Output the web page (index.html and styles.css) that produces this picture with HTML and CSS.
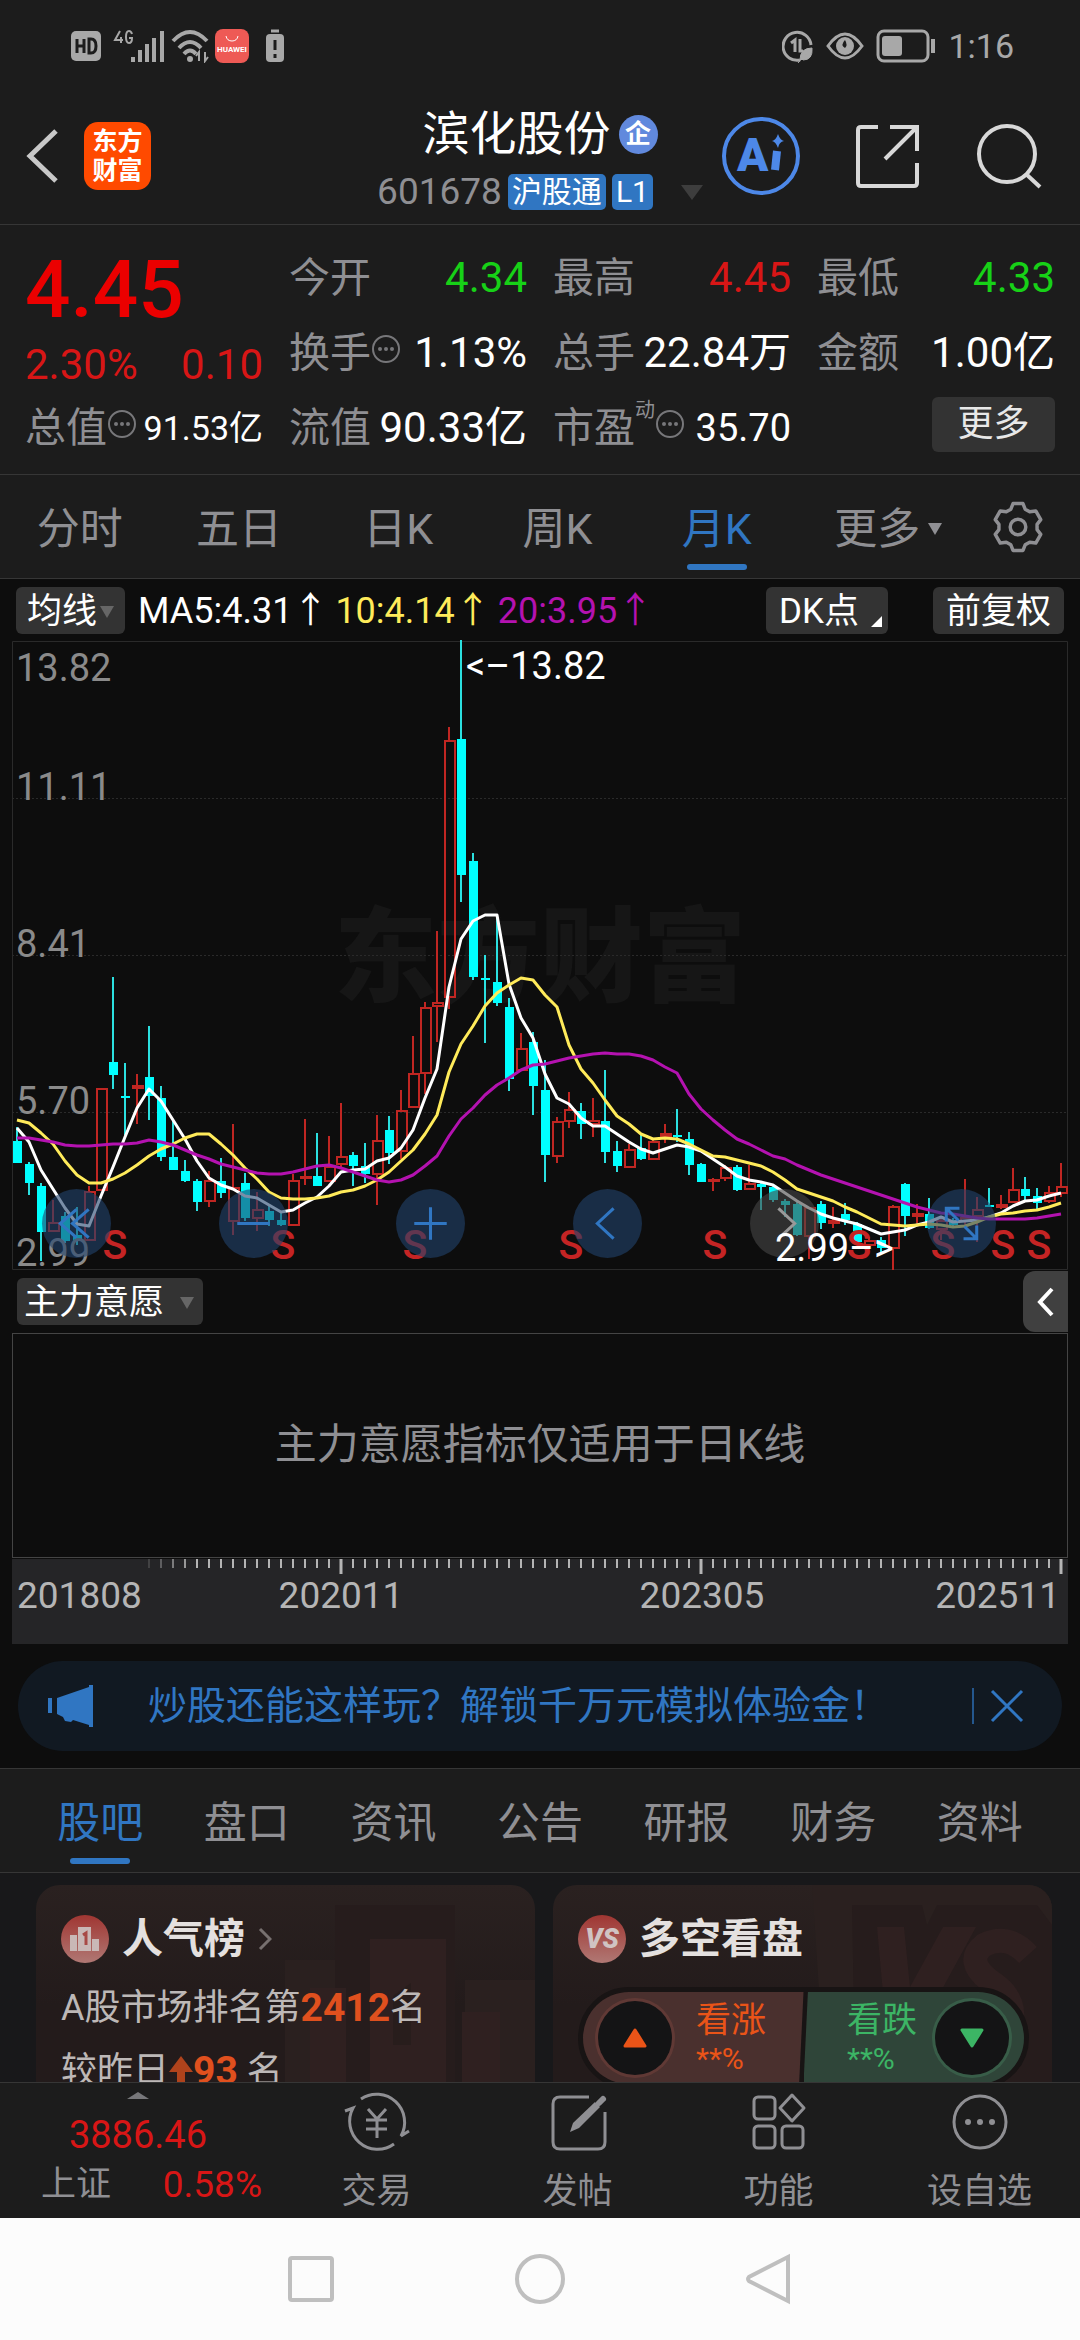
FILE: index.html
```html
<!DOCTYPE html>
<html lang="zh-CN">
<head>
	<meta charset="utf-8">
	<meta name="viewport" content="width=device-width, initial-scale=1">
	<title>滨化股份 601678</title>
	<link rel="stylesheet" href="styles.css">
</head>
<body>
<div class="app">
	<div class="statusbar">
		<div class="status-group">
			<svg width="30" height="32" viewBox="0 0 30 32"><rect y="1" width="30" height="30" rx="5" fill="#a8a8a8"/><path d="M6 9v14M13 9v14M6 16h7M18 9v14h2q5 0 5-7t-5-7z" fill="none" stroke="#1c1c1c" stroke-width="3"/></svg>
			<svg class="signal" width="52" height="34" viewBox="0 0 52 34"><path d="M7 2L2 11h8M8 8v6M19 5q-1-3-3-3-3 0-3 6t3 6q3 0 3-5h-3" fill="none" stroke="#a8a8a8" stroke-width="2"/><path d="M20 28v5M27 21v12M34 15v18M41 9v24M49 2v31" stroke="#a8a8a8" stroke-width="4"/></svg>
			<svg width="38" height="34" viewBox="0 0 38 34" fill="none" stroke="#a8a8a8" stroke-width="4"><path d="M2 12q17-18 34 0M8 19q11-12 22 0M13 25q6-7 12 0"/><circle cx="19" cy="30" r="3" fill="#a8a8a8" stroke="none"/><path d="M28 32v-9l-3 4M34 23v9l3-4" stroke-width="2"/></svg>
			<svg class="hw" width="34" height="34" viewBox="0 0 34 34"><rect width="34" height="34" rx="8" fill="#ee5a55"/><path d="M11 7q1 5 6 5t6-5" fill="none" stroke="#fff" stroke-width="1"/><text x="17" y="23" text-anchor="middle" class="hw-text">HUAWEI</text></svg>
			<svg class="batt" width="20" height="34" viewBox="0 0 20 34"><path d="M6 2h8" stroke="#a8a8a8" stroke-width="3"/><rect x="1" y="5" width="18" height="28" rx="4" fill="#a8a8a8"/><path d="M10 11v10M10 25v4" stroke="#1c1c1c" stroke-width="3"/></svg>
		</div>
		<div class="status-group">
			<svg width="32" height="34" viewBox="0 0 32 34" fill="none" stroke="#a8a8a8" stroke-width="3"><path d="M18 31A14 14 0 1 1 29 16"/><path d="M9 14l4-3v12M18 10v12h3"/><path d="M18 31q0-12 12-12 1 12-9 12M16 34l8-9" fill="#a8a8a8" stroke-width="1"/></svg>
			<svg width="38" height="28" viewBox="0 0 38 28"><path d="M2 14Q19-10 36 14 19 38 2 14z" fill="none" stroke="#a8a8a8" stroke-width="3"/><circle cx="19" cy="14" r="9" fill="#a8a8a8"/><path d="M19 8q-5 5 0 8 3-3 0-8z" fill="#1c1c1c"/></svg>
			<svg width="60" height="34" viewBox="0 0 60 34"><rect x="2" y="2" width="50" height="30" rx="6" fill="none" stroke="#a8a8a8" stroke-width="3"/><rect x="6" y="7" width="20" height="20" rx="3" fill="#a8a8a8"/><path d="M57 10v14" stroke="#a8a8a8" stroke-width="4"/></svg>
			<span class="clock">1:16</span>
		</div>
	</div>

	<header class="header">
		<div class="header-left">
			<button class="icon-btn" aria-label="返回"><svg width="32" height="54" viewBox="0 0 32 54"><path d="M30 2L4 27l26 25" fill="none" stroke="#c8c8c8" stroke-width="5"/></svg></button>
			<div class="logo">东方<br>财富</div>
		</div>
		<div class="header-title">
			<h1>滨化股份<span class="badge">企</span></h1>
			<div class="code-line">
				<span class="code">601678</span><span class="tag">沪股通</span><span class="tag">L1</span><i class="tri tri-code"></i>
			</div>
		</div>
		<div class="header-right">
			<button class="icon-btn" aria-label="Ai"><svg width="78" height="78" viewBox="0 0 78 78"><circle cx="39" cy="39" r="37" fill="none" stroke="#4d88e8" stroke-width="4"/><text x="15" y="54" class="ai-text">A</text><path d="M55 34l-2 19" stroke="#4d88e8" stroke-width="8"/><path d="M56 17q2 6 6 7-5 1-6 7-2-6-6-7 4-1 6-7z" fill="#4d88e8"/></svg></button>
			<button class="icon-btn" aria-label="分享"><svg width="64" height="64" viewBox="0 0 64 64" fill="none" stroke="#d8d8d8" stroke-width="4"><path d="M22 3H5q-3 0-3 3v53q0 3 3 3h53q3 0 3-3V39"/><path d="M34 3h27v24M60 4L29 35"/></svg></button>
			<button class="icon-btn" aria-label="搜索"><svg width="66" height="66" viewBox="0 0 66 66" fill="none" stroke="#d8d8d8" stroke-width="4"><circle cx="31" cy="31" r="28"/><path d="M50 51l14 13"/></svg></button>
		</div>
	</header>

	<section class="quote">
		<div class="price-block">
			<div class="price">4.45</div>
			<div class="change"><span>2.30%</span><span>0.10</span></div>
		</div>
		<div class="cell"><label>今开</label><b class="down">4.34</b></div>
		<div class="cell"><label>最高</label><b class="up">4.45</b></div>
		<div class="cell"><label>最低</label><b class="down">4.33</b></div>
		<div class="cell"><label>换手</label><svg class="dots"><use href="#dots"/></svg><b>1.13%</b></div>
		<div class="cell"><label>总手</label><b>22.84万</b></div>
		<div class="cell"><label>金额</label><b>1.00亿</b></div>
		<div class="cell"><label>总值</label><svg class="dots"><use href="#dots"/></svg><b class="small">91.53亿</b></div>
		<div class="cell"><label>流值</label><b>90.33亿</b></div>
		<div class="cell"><label>市盈<sup>动</sup></label><svg class="dots"><use href="#dots"/></svg><b class="medium">35.70</b></div>
		<div class="cell"><button class="more-btn">更多</button></div>
	</section>

	<nav class="tabs period-tabs">
		<button class="tab">分时</button>
		<button class="tab">五日</button>
		<button class="tab">日K</button>
		<button class="tab">周K</button>
		<button class="tab active">月K</button>
		<button class="tab tab-more">更多<i class="tri tri-tab"></i></button>
		<button class="tab-gear" aria-label="设置"><svg width="52" height="52" viewBox="-12 -12 24 24" fill="none" stroke="#8f8f93" stroke-width="1.6" stroke-linejoin="round"><path d="M-3.3-8.2L-2.3-10.8H2.3L3.3-8.2 5.4-7 8.2-7.4 10.5-3.4 8.8-1.2V1.2L10.5 3.4 8.2 7.4 5.4 7 3.3 8.2 2.3 10.8H-2.3L-3.3 8.2-5.4 7-8.2 7.4-10.5 3.4-8.8 1.2V-1.2L-10.5-3.4-8.2-7.4-5.4-7z"/><circle r="3.6"/></svg></button>
	</nav>

	<main class="main">
		<div class="chart-area">
			<div class="chart-toolbar">
				<button class="chip chip-ma">均线<i class="tri"></i></button>
				<span class="ma ma5">MA5:4.31↑</span>
				<span class="ma ma10">10:4.14↑</span>
				<span class="ma ma20">20:3.95↑</span>
				<button class="chip chip-dk">DK点<i class="corner"></i></button>
				<button class="chip">前复权</button>
			</div>
			<div class="chart">
				<svg id="kline" viewBox="0 0 1056 630">
					<text x="528" y="354" class="watermark">东方财富</text>
					<path d="M0 158.5H1056M0 315.5H1056M0 472.5H1056" stroke="#2a2a2a" stroke-dasharray="2 2"/>
					<path d="M.5 1.5H1055.5V629.5H.5z" fill="none" stroke="#2a2a2a"/>
					<g id="candles"></g>
					<g class="axis-label">
						<text x="4" y="41">13.82</text>
						<text x="4" y="160">11.11</text>
						<text x="4" y="317">8.41</text>
						<text x="4" y="474">5.70</text>
						<text x="4" y="626">2.99</text>
					</g>
					<g id="lines" fill="none" stroke-width="3" stroke-linejoin="round"></g>
					<g id="signals" class="signal-s"></g>
					<text x="454" y="39" class="peak">&lt;–13.82</text>
				</svg>
				<div class="chart-controls">
					<button class="round" aria-label="最左"><svg viewBox="0 0 68 68"><path d="M34 20L18 34l16 14M46 20L30 34l16 14"/></svg></button>
					<button class="round" aria-label="缩小"><svg viewBox="0 0 68 68"><path d="M18 34h32"/></svg></button>
					<button class="round" aria-label="放大"><svg viewBox="0 0 68 68"><path d="M18 34h32M34 18v32"/></svg></button>
					<button class="round" aria-label="左移"><svg viewBox="0 0 68 68"><path d="M40 19L24 34l16 15"/></svg></button>
					<button class="round round-off" aria-label="右移"><svg viewBox="0 0 68 68"><path d="M28 19l16 15-16 15"/></svg></button>
					<button class="round" aria-label="全屏"><svg viewBox="0 0 68 68"><path d="M19 32V19h13M19 19l12 12M49 36v13H36M49 49L37 37"/></svg></button>
				</div>
				<svg class="chart-top" viewBox="0 0 1056 630"><text x="763" y="621" class="peak">2.99–&gt;</text></svg>
			</div>
			<div class="indicator-bar">
				<button class="chip">主力意愿<i class="tri"></i></button>
				<button class="drawer" aria-label="展开"><svg width="18" height="30" viewBox="0 0 18 30"><path d="M15 2L3 15l12 13" fill="none" stroke="#fff" stroke-width="4"/></svg></button>
			</div>
			<div class="indicator">主力意愿指标仅适用于日K线</div>
			<svg class="timeline" viewBox="0 0 1056 85">
				<g id="ticks" stroke="#b5b5b5"></g>
				<text x="5" y="49">201808</text>
				<text x="329" y="49" text-anchor="middle">202011</text>
				<text x="690" y="49" text-anchor="middle">202305</text>
				<text x="1048" y="49" text-anchor="end">202511</text>
			</svg>
			<div class="notice">
				<svg width="46" height="42" viewBox="0 0 46 42" fill="#3076c2"><path d="M0 13h4v15H0zM9 13l32-11v38l-16-5-2 2-6-1-2-4-6-3z"/><path d="M41 0h4v42h-4z"/></svg>
				<a href="#" class="notice-text">炒股还能这样玩？解锁千万元模拟体验金！</a>
				<i class="notice-line"></i>
				<button class="icon-btn" aria-label="关闭"><svg width="34" height="34" viewBox="0 0 34 34"><path d="M2 2l30 30M32 2L2 32" stroke="#3076c2" stroke-width="3"/></svg></button>
			</div>
		</div>

		<nav class="tabs info-tabs">
			<button class="tab active">股吧</button>
			<button class="tab">盘口</button>
			<button class="tab">资讯</button>
			<button class="tab">公告</button>
			<button class="tab">研报</button>
			<button class="tab">财务</button>
			<button class="tab">资料</button>
		</nav>

		<div class="cards">
			<div class="card">
				<svg class="card-bg" viewBox="0 0 260 300"><path d="M10 75h60v225H10zM190 95h70v205h-70z" fill="#2a201f"/><path d="M60 20h120v280H60z" fill="#261c1c"/><path d="M35 103h36v197H35zM95 54h76v246H95zM187 127h38v173h-38z" fill="#2f2020"/><path d="M118 111l18-13v62h-18v-35z" fill="#281d1c"/></svg>
				<h2>
					<svg width="48" height="48" viewBox="0 0 48 48"><circle cx="24" cy="24" r="24" fill="url(#red)"/><path d="M9 20h7v16H9zM17 12h13v24H17zM31 24h7v12h-7z" fill="#c9b8b6"/><path d="M22 20l3-2v12" fill="none" stroke="#a84a46" stroke-width="3"/></svg>
					人气榜
					<svg class="go" width="14" height="24" viewBox="0 0 14 24"><path d="M2 2l10 10L2 22" fill="none" stroke="#77706f" stroke-width="3"/></svg>
				</h2>
				<p>A股市场排名第<strong>2412</strong>名</p>
				<p>较昨日<svg class="rise" width="24" height="34" viewBox="0 0 24 34"><path d="M12 2l12 16h-8v16H8V18H0z" fill="#b0431c"/></svg><strong>93</strong> 名</p>
			</div>
			<div class="card">
				<svg class="card-bg" viewBox="0 0 260 300"><path d="M20 0h240v300H40z" fill="#2a201f"/><path d="M60 20h70l5 20 10-20h100l15 20v260H65z" fill="#261c1c"/><path d="M85 42h27l6 60 33-60h33l-60 110H95z" fill="#2f2020"/><path d="M236 70q-20-22-44-10-20 16 6 36 32 20 18 52-20 26-60 10" fill="none" stroke="#2f2020" stroke-width="24"/></svg>
				<h2>
					<svg width="48" height="48" viewBox="0 0 48 48"><circle cx="24" cy="24" r="24" fill="url(#red)"/><text x="24" y="33" text-anchor="middle" class="vs-text">VS</text></svg>
					多空看盘
				</h2>
				<div class="vote">
					<button class="vote-up"><span class="vote-dot"><svg width="24" height="20" viewBox="0 0 24 20"><path d="M12 2l10 16H2z" fill="#ea5418" stroke="#ea5418" stroke-width="3" stroke-linejoin="round"/></svg></span><span class="vote-text">看涨<small>**%</small></span></button>
					<button class="vote-down"><span class="vote-text">看跌<small>**%</small></span><span class="vote-dot"><svg width="24" height="20" viewBox="0 0 24 20"><path d="M12 18L2 2h20z" fill="#3cb565" stroke="#3cb565" stroke-width="3" stroke-linejoin="round"/></svg></span></button>
				</div>
			</div>
		</div>
	</main>

	<footer class="bottombar">
		<button class="index">
			<i class="tri tri-up"></i>
			<span class="index-value">3886.46</span>
			<span class="index-row"><span>上证</span><em>0.58%</em></span>
		</button>
		<button class="action"><svg width="66" height="60" viewBox="0 0 66 60" fill="none" stroke="#8f8f93" stroke-width="3"><path d="M17 7A28 28 0 0 1 57 44l8-5M50 52A28 28 0 0 1 9 16l-8 3"/><path d="M24 17l9 10 9-10M22 28h21M22 37h21M33 27v19"/></svg>交易</button>
		<button class="action"><svg width="60" height="60" viewBox="0 0 60 60" fill="none" stroke="#8f8f93" stroke-width="3"><path d="M41 5H12q-7 0-7 7v38q0 7 7 7h38q7 0 7-7V20"/><path d="M22 40l3-9L47 10l5 5-21 21z" fill="#8f8f93" stroke="none"/><path d="M51 11l4-4" stroke-width="6" stroke-linecap="round"/></svg>发帖</button>
		<button class="action"><svg width="60" height="60" viewBox="0 0 60 60" fill="none" stroke="#8f8f93" stroke-width="3"><rect x="5" y="5" width="21" height="22" rx="4"/><rect x="5" y="34" width="21" height="22" rx="4"/><rect x="33" y="34" width="21" height="22" rx="4"/><path d="M43 3l12 13-12 13-12-13z" stroke-linejoin="round"/></svg>功能</button>
		<button class="action"><svg width="60" height="60" viewBox="0 0 60 60"><circle cx="30" cy="30" r="26" fill="none" stroke="#8f8f93" stroke-width="3"/><circle cx="18" cy="30" r="3" fill="#8f8f93"/><circle cx="30" cy="30" r="3" fill="#8f8f93"/><circle cx="42" cy="30" r="3" fill="#8f8f93"/></svg>设自选</button>
	</footer>

	<div class="navbar">
		<svg width="48" height="48" viewBox="0 0 48 48"><rect x="3" y="3" width="42" height="42" rx="2"/></svg>
		<svg width="50" height="50" viewBox="0 0 50 50"><circle cx="25" cy="25" r="23"/></svg>
		<svg width="48" height="52" viewBox="0 0 48 52"><path d="M43 4v44L4 28q-2-2 0-4z"/></svg>
	</div>
</div>

<svg width="0" height="0" class="defs">
	<defs>
		<symbol id="dots" viewBox="0 0 30 30"><circle cx="15" cy="15" r="13" fill="none" stroke="#77777a" stroke-width="2"/><circle cx="9" cy="15" r="2" fill="#77777a"/><circle cx="15" cy="15" r="2" fill="#77777a"/><circle cx="21" cy="15" r="2" fill="#77777a"/></symbol>
		<linearGradient id="red" x1="0" y1="0" x2="0" y2="1"><stop offset="0" stop-color="#a03632"/><stop offset="1" stop-color="#b07874"/></linearGradient>
	</defs>
</svg>
<script src="chart.js"></script>
</body>
</html>
```

FILE: styles.css
```css
* {
	box-sizing: border-box;
}
body {
	margin: 0;
	background-color: #0d0d0d;
	color: #fff;
	font-family: Roboto, "Noto Sans CJK SC", sans-serif;
	font-size: 36px;
	line-height: 1.2;
}
button {
	margin: 0;
	padding: 0;
	border: 0;
	background: none;
	color: inherit;
	font: inherit;
	cursor: pointer;
}
svg {
	display: block;
	flex: none;
}
.defs {
	position: absolute;
}
.app {
	display: flex;
	flex-direction: column;
	height: 100vh;
	overflow: hidden;
}
.tri {
	width: 0;
	height: 0;
	border: 7px solid transparent;
	border-top: 12px solid #666;
	border-bottom: 0;
}

/* status bar */
.statusbar {
	display: flex;
	justify-content: space-between;
	align-items: center;
	height: 88px;
	padding: 4px 66px 0 71px;
	background-color: #1c1c1c;
}
.status-group {
	display: flex;
	align-items: center;
	gap: 12px;
}
.signal {
	margin-right: -6px;
}
.hw {
	margin-left: -6px;
}
.batt {
	margin-left: 4px;
}
.hw-text {
	font-size: 8px;
	font-weight: bold;
	fill: #fff;
}
.clock {
	color: #a8a8a8;
	font-size: 34px;
	line-height: 40px;
}

/* title */
.header {
	display: grid;
	grid-template-columns: 1fr auto 1fr;
	align-items: center;
	height: 137px;
	background-color: #1c1c1c;
	border-bottom: 1px solid #363636;
}
.icon-btn {
	display: block;
}
.header-left {
	display: flex;
	align-items: center;
	gap: 26px;
	padding-left: 26px;
}
.logo {
	width: 67px;
	height: 68px;
	padding-top: 5px;
	border-radius: 14px;
	background-color: #ff4a00;
	font-size: 25px;
	font-weight: bold;
	line-height: 29px;
	text-align: center;
}
.header-title {
	padding-top: 14px;
}
.header-title h1 {
	display: flex;
	justify-content: center;
	align-items: center;
	gap: 8px;
	margin: 0;
	font-size: 47px;
	font-weight: normal;
	line-height: 58px;
}
.badge {
	width: 39px;
	height: 39px;
	border-radius: 50%;
	background-color: #6189dd;
	font-size: 26px;
	font-weight: bold;
	line-height: 38px;
	text-align: center;
}
.code-line {
	display: flex;
	align-items: center;
	gap: 6px;
	height: 58px;
}
.code {
	color: #8f8f93;
	font-size: 37px;
}
.tag {
	padding: 0 4px;
	border-radius: 5px;
	background-color: #3076c2;
	font-size: 30px;
	line-height: 36px;
}
.tri-code {
	margin-left: 22px;
	border-width: 15px 11px 0;
	border-top-color: #3d3d3d;
}
.header-right {
	display: flex;
	justify-content: flex-end;
	align-items: center;
	gap: 56px;
	padding-right: 38px;
}
.ai-text {
	font-size: 46px;
	font-weight: 900;
	fill: #4d88e8;
}

/* quote */
.quote {
	display: grid;
	grid-template-columns: repeat(4, 1fr);
	grid-auto-rows: 75px;
	column-gap: 26px;
	padding: 15px 25px 9px;
	background-color: #1c1c1c;
	border-bottom: 1px solid #363636;
}
.price-block {
	grid-row: span 2;
	color: #eb0000;
}
.price {
	font-size: 80px;
	font-weight: 500;
	line-height: 100px;
}
.change {
	display: flex;
	justify-content: space-between;
	color: #d81616;
	font-size: 42px;
	line-height: 50px;
}
.cell {
	display: flex;
	align-items: center;
	white-space: nowrap;
}
.cell label {
	display: flex;
	color: #8f8f93;
	font-size: 41px;
	line-height: 60px;
}
.cell sup {
	font-size: 20px;
	line-height: 24px;
}
.cell b {
	margin-left: auto;
	font-size: 42px;
	font-weight: normal;
	line-height: 60px;
}
.cell .small {
	font-size: 34px;
}
.cell .medium {
	font-size: 38px;
}
.cell .up {
	color: #d81616;
}
.cell .down {
	color: #17d117;
}
.dots {
	width: 30px;
	height: 30px;
	margin-bottom: 8px;
}
.more-btn {
	width: 123px;
	height: 55px;
	margin: 0 0 6px auto;
	border-radius: 6px;
	background-color: #333;
	color: #e8e8e8;
	font-size: 36px;
}

/* tabs */
.tabs {
	display: flex;
	height: 104px;
	background-color: #1c1c1c;
	border-bottom: 1px solid #363636;
}
.tab {
	position: relative;
	flex: 1;
	padding-top: 5px;
	color: #8f8f93;
	font-size: 43px;
	line-height: 60px;
}
.tab.active {
	color: #3076c2;
}
.tab.active::after {
	content: "";
	position: absolute;
	left: 50%;
	bottom: 8px;
	width: 60px;
	height: 6px;
	margin-left: -30px;
	border-radius: 3px;
	background-color: #3076c2;
}
.tab-more {
	display: flex;
	flex: none;
	justify-content: center;
	align-items: center;
	gap: 8px;
	width: 17%;
}
.tri-tab {
	border-top-color: #8f8f93;
}
.tab-gear {
	padding: 0 36px 0 12px;
}
.info-tabs {
	height: 105px;
	padding: 0 27px;
	border-top: 1px solid #363636;
}

/* chart */
.main {
	flex: 1;
	min-height: 0;
	overflow: hidden;
	background-color: #18181a;
}
.chart-area {
	padding: 0 12px 17px;
	background-color: #0d0d0d;
}
.chart-toolbar {
	display: flex;
	align-items: center;
	gap: 7px;
	height: 61px;
	padding: 2px 4px 0;
	white-space: nowrap;
}
.chip {
	display: flex;
	align-items: center;
	gap: 4px;
	height: 47px;
	padding: 2px 13px 0;
	border-radius: 6px;
	background-color: #333;
	font-size: 35px;
}
.chip-ma {
	gap: 3px;
	padding: 2px 11px 0;
}
.ma {
	padding-top: 2px;
	font-size: 36px;
}
.ma5 {
	margin-left: 6px;
}
.ma10 {
	color: #ffeb5a;
}
.ma20 {
	color: #b412b0;
}
.chip-dk {
	margin: 0 38px 0 auto;
	padding-right: 6px;
}
.chip-dk .corner {
	align-self: flex-end;
	margin: 0 0 7px 8px;
	border-left: 11px solid transparent;
	border-bottom: 11px solid #fff;
}
.chart {
	position: relative;
}
.chart > svg {
	width: 100%;
}
.chart-top {
	position: absolute;
	top: 0;
	left: 0;
	pointer-events: none;
}
.watermark {
	font-size: 103px;
	font-weight: 900;
	text-anchor: middle;
	fill: #161616;
}
.axis-label {
	font-size: 38px;
	fill: #8a8a8a;
}
.signal-s {
	font-size: 41px;
	font-weight: 500;
	text-anchor: middle;
	fill: #c42424;
}
.peak {
	font-size: 38px;
	fill: #fff;
}
.chart-controls {
	position: absolute;
	left: 30px;
	right: 72px;
	bottom: 12px;
	display: flex;
	justify-content: space-between;
}
.round {
	width: 69px;
	height: 69px;
	border-radius: 50%;
	background-color: rgba(34, 66, 108, 0.6);
}
.round path {
	fill: none;
	stroke: #3076c2;
	stroke-width: 3;
}
.round-off {
	background-color: rgba(70, 70, 70, 0.6);
}
.round-off path {
	stroke: #999;
}
.indicator-bar {
	display: flex;
	justify-content: space-between;
	align-items: center;
	height: 63px;
	padding-left: 5px;
}
.indicator-bar .chip {
	gap: 16px;
	padding: 2px 9px 0 7px;
}
.drawer {
	display: flex;
	justify-content: center;
	align-items: center;
	width: 45px;
	height: 61px;
	border-radius: 12px 0 0 12px;
	background-color: #404040;
}
.indicator {
	display: flex;
	justify-content: center;
	align-items: center;
	height: 225px;
	border: 1px solid #444;
	color: #8f8f93;
	font-size: 42px;
}
.timeline {
	width: 100%;
	margin-top: 1px;
	background-color: #252527;
	font-size: 37px;
	fill: #b5b5b5;
}
.notice {
	display: flex;
	align-items: center;
	height: 90px;
	margin: 17px 6px 0;
	padding: 0 38px 0 30px;
	border-radius: 45px;
	background-color: #111922;
}
.notice-text {
	flex: 1;
	margin-left: 54px;
	color: #3076c2;
	font-size: 39px;
	text-decoration: none;
	white-space: nowrap;
}
.notice-line {
	width: 2px;
	height: 36px;
	margin-right: 16px;
	background-color: #24578e;
}

/* cards */
.cards {
	display: grid;
	grid-template-columns: 1fr 1fr;
	gap: 18px;
	padding: 12px 28px 12px 36px;
}
.card {
	position: relative;
	overflow: hidden;
	height: 300px;
	padding: 24px 25px;
	border-radius: 24px;
	background: linear-gradient(#2a2120, #231b1b 40%, #231b1b);
}
.card-bg {
	position: absolute;
	top: 0;
	right: 0;
	height: 300px;
}
.card h2 {
	position: relative;
	display: flex;
	align-items: center;
	gap: 13px;
	margin: 0 0 14px;
	color: #e4e0df;
	font-size: 41px;
	font-weight: bold;
	line-height: 60px;
}
.card p {
	position: relative;
	display: flex;
	align-items: center;
	margin: 0 0 13px;
	color: #bdb8b7;
	font-size: 36px;
	line-height: 50px;
	white-space: pre;
}
.card strong {
	color: #e0501e;
	font-size: 39px;
}
.vs-text {
	font-size: 27px;
	font-style: italic;
	font-weight: 900;
	fill: #d0c4c3;
}
.vote {
	position: relative;
	display: flex;
	width: 451px;
	margin-top: 18px;
	border: 5px solid #181414;
	border-radius: 52px;
	background-color: #181414;
	overflow: hidden;
}
.vote button {
	display: flex;
	flex: 1;
	align-items: center;
	height: 92px;
	padding: 0 15px;
	text-align: left;
}
.vote .vote-up {
	gap: 24px;
	background-color: #4a302e;
	color: #ea5418;
	clip-path: polygon(0 0, 100% 0, 98% 100%, 0 100%);
}
.vote .vote-down {
	justify-content: flex-end;
	gap: 18px;
	background-color: #2f4539;
	color: #3cb565;
	clip-path: polygon(2% 0, 100% 0, 100% 100%, 0 100%);
}
.vote-dot {
	display: flex;
	justify-content: center;
	align-items: center;
	width: 74px;
	height: 74px;
	border-radius: 50%;
	background-color: #141415;
	box-shadow: 0 0 0 3px rgba(150, 80, 70, 0.3);
}
.vote-down .vote-dot {
	box-shadow: 0 0 0 3px rgba(80, 150, 110, 0.3);
}
.vote-text {
	font-size: 35px;
	line-height: 42px;
}
.vote-text small {
	display: block;
	font-size: 30px;
	line-height: 34px;
}

/* bottom */
.bottombar {
	display: flex;
	height: 136px;
	background-color: #1c1c1c;
	border-top: 1px solid #363636;
	color: #8f8f93;
	font-size: 35px;
}
.index {
	display: flex;
	flex-direction: column;
	align-items: center;
	width: 276px;
}
.tri-up {
	margin-top: 9px;
	border-width: 0 11px 7px;
	border-bottom: 7px solid #77777a;
}
.index-value {
	margin-top: 12px;
	color: #d81616;
	font-size: 38px;
	line-height: 48px;
}
.index-row {
	display: flex;
	align-self: stretch;
	justify-content: space-between;
	padding: 2px 14px 0 41px;
	line-height: 48px;
}
.index-row em {
	color: #d81616;
	font-size: 37px;
	font-style: normal;
}
.action {
	display: flex;
	flex: 1;
	flex-direction: column;
	align-items: center;
	gap: 16px;
	padding-top: 9px;
	line-height: 48px;
}
.navbar {
	display: flex;
	justify-content: center;
	align-items: center;
	gap: 180px;
	height: 122px;
	background-color: #fcfcfc;
}
.navbar svg {
	fill: none;
	stroke: #bfbfbf;
	stroke-width: 4;
}
```

FILE: chart.js
```js
// one row per month: up/down, then y of high, body top, body bottom, low
const candles = [
	'd 487 501 523 523', 'd 522 524 543 555', 'd 543 546 592 621', 'u 560 582 592 592', 'd 572 576 601 603',
	'd 567 595 601 605', 'u 546 551 601 601', 'u 448 448 551 551', 'd 337 422 435 449', 'd 423 456 458 495',
	'u 434 445 449 484', 'd 386 437 456 480', 'd 446 458 517 521', 'd 479 517 530 530', 'd 520 531 541 542',
	'd 539 541 562 571', 'u 531 540 562 567', 'd 518 541 553 558', 'u 484 547 582 595', 'd 533 543 578 581',
	'u 552 569 579 591', 'd 564 571 580 586', 'd 572 580 585 586', 'u 534 540 586 586', 'u 479 536 538 545',
	'd 493 536 546 546', 'u 496 526 542 542', 'u 463 516 525 529', 'd 512 515 526 546', 'd 503 526 534 543',
	'u 475 500 535 565', 'd 476 490 513 524', 'u 450 470 512 519', 'u 396 433 468 468', 'u 362 367 434 454',
	'u 291 362 367 402', 'u 87 100 358 369', 'd 0 99 235 262', 'd 213 221 337 340', 'd 315 338 340 403',
	'd 276 342 363 366', 'd 358 367 439 451', 'u 393 408 431 431', 'd 392 402 446 475', 'd 420 450 515 542',
	'u 477 481 517 523', 'u 452 469 482 488', 'd 463 471 484 499', 'u 458 480 485 497', 'd 430 481 512 523',
	'd 501 511 526 532', 'u 504 509 528 528', 'd 495 508 519 520', 'u 498 501 520 520', 'u 484 493 497 503',
	'd 469 495 497 502', 'd 492 499 525 535', 'd 523 524 542 542', 'u 538 539 542 551', 'u 525 527 539 541',
	'd 525 527 550 551', 'u 525 543 550 550', 'd 542 544 547 570', 'd 544 547 560 562', 'd 559 561 565 577',
	'd 562 564 595 596', 'u 567 567 597 619', 'd 561 564 583 589', 'u 567 580 584 588', 'd 563 574 580 585',
	'd 582 584 602 603', 'u 597 600 606 609', 'd 597 600 608 614', 'u 565 566 609 630', 'd 543 544 576 596',
	'u 564 573 577 583', 'd 558 574 588 589', 'u 577 580 590 600', 'd 578 580 585 586', 'u 539 577 582 585',
	'u 557 569 577 602', 'd 548 565 566 567', 'u 555 564 568 569', 'u 528 549 563 563', 'd 537 549 556 560',
	'd 548 556 563 571', 'u 546 552 562 563', 'u 523 546 554 557'
];
const ma5 = [488,502,530,549,568,584,586,556,527,497,468,449,461,480,499,521,538,545,549,556,558,565,572,570,563,557,546,532,530,529,521,518,508,490,458,429,347,299,281,275,275,344,378,398,434,458,464,478,486,486,494,502,509,513,509,505,507,511,519,527,536,540,542,545,553,561,568,574,578,581,584,589,594,592,590,585,582,577,582,581,580,577,573,566,561,560,556,553];
const ma10 = [480,483,493,504,521,535,543,543,539,533,525,516,509,504,498,494,494,504,515,528,539,552,558,559,559,558,556,552,550,546,540,532,521,510,494,475,432,404,386,366,353,345,338,340,355,367,405,429,443,460,476,484,494,499,498,499,504,510,516,517,520,523,526,532,540,549,553,557,561,567,572,578,584,585,586,585,584,585,587,586,582,577,574,573,571,570,567,563];
const ma20 = [498,498,500,502,505,506,506,505,504,504,503,500,502,505,510,515,519,524,527,530,533,534,534,532,529,526,525,528,532,536,540,542,540,535,526,516,496,479,468,455,445,438,430,425,424,421,418,416,414,413,414,414,416,420,427,433,454,469,480,490,499,504,510,516,519,525,530,535,539,543,547,551,555,559,563,567,570,573,574,576,578,579,579,579,579,578,576,574];
const sellMarks = [103, 271, 403, 559, 703, 847, 931, 991, 1027];

const NS = 'http://www.w3.org/2000/svg';
function add(parent, name, attrs) {
	const el = document.createElementNS(NS, name);
	for (const key in attrs) el.setAttribute(key, attrs[key]);
	document.getElementById(parent).appendChild(el);
	return el;
}
function xAt(i) {
	return 5 + i * 12;
}

candles.forEach(function(row, i) {
	const parts = row.split(' ');
	const [high, top, bottom, low] = parts.slice(1).map(Number);
	const x = xAt(i);
	if (parts[0] === 'd') {
		add('candles', 'path', { d: `M${x} ${high}V${low}`, stroke: '#2be0e0', 'stroke-width': 2 });
		add('candles', 'rect', { x: x - 4, y: top, width: 9, height: Math.max(bottom - top, 2), fill: '#00ffff' });
	} else {
		add('candles', 'path', { d: `M${x} ${high}V${top}M${x} ${bottom}V${low}`, stroke: '#c02622', 'stroke-width': 2 });
		add('candles', 'rect', { x: x - 4, y: top + 1, width: 10, height: Math.max(bottom - top - 2, 1), fill: 'none', stroke: '#c02622', 'stroke-width': 2 });
	}
});

[[ma5, '#ffffff'], [ma10, '#ffeb5a'], [ma20, '#b412b0']].forEach(function(line) {
	const points = line[0].map((y, i) => xAt(i) + ',' + y).join(' ');
	add('lines', 'polyline', { points: points, stroke: line[1] });
});

sellMarks.forEach(function(x) {
	add('signals', 'text', { x: x, y: 619 }).textContent = 'S';
});

for (let i = 11; i < 88; i++) {
	const major = i === 27 || i === 57 || i === 87;
	add('ticks', 'path', {
		d: `M${xAt(i)} 0V${major ? 15 : 9}`,
		'stroke-width': major ? 3 : 2,
		opacity: Math.min(1, (i - 10) / 5)
	});
}
```
